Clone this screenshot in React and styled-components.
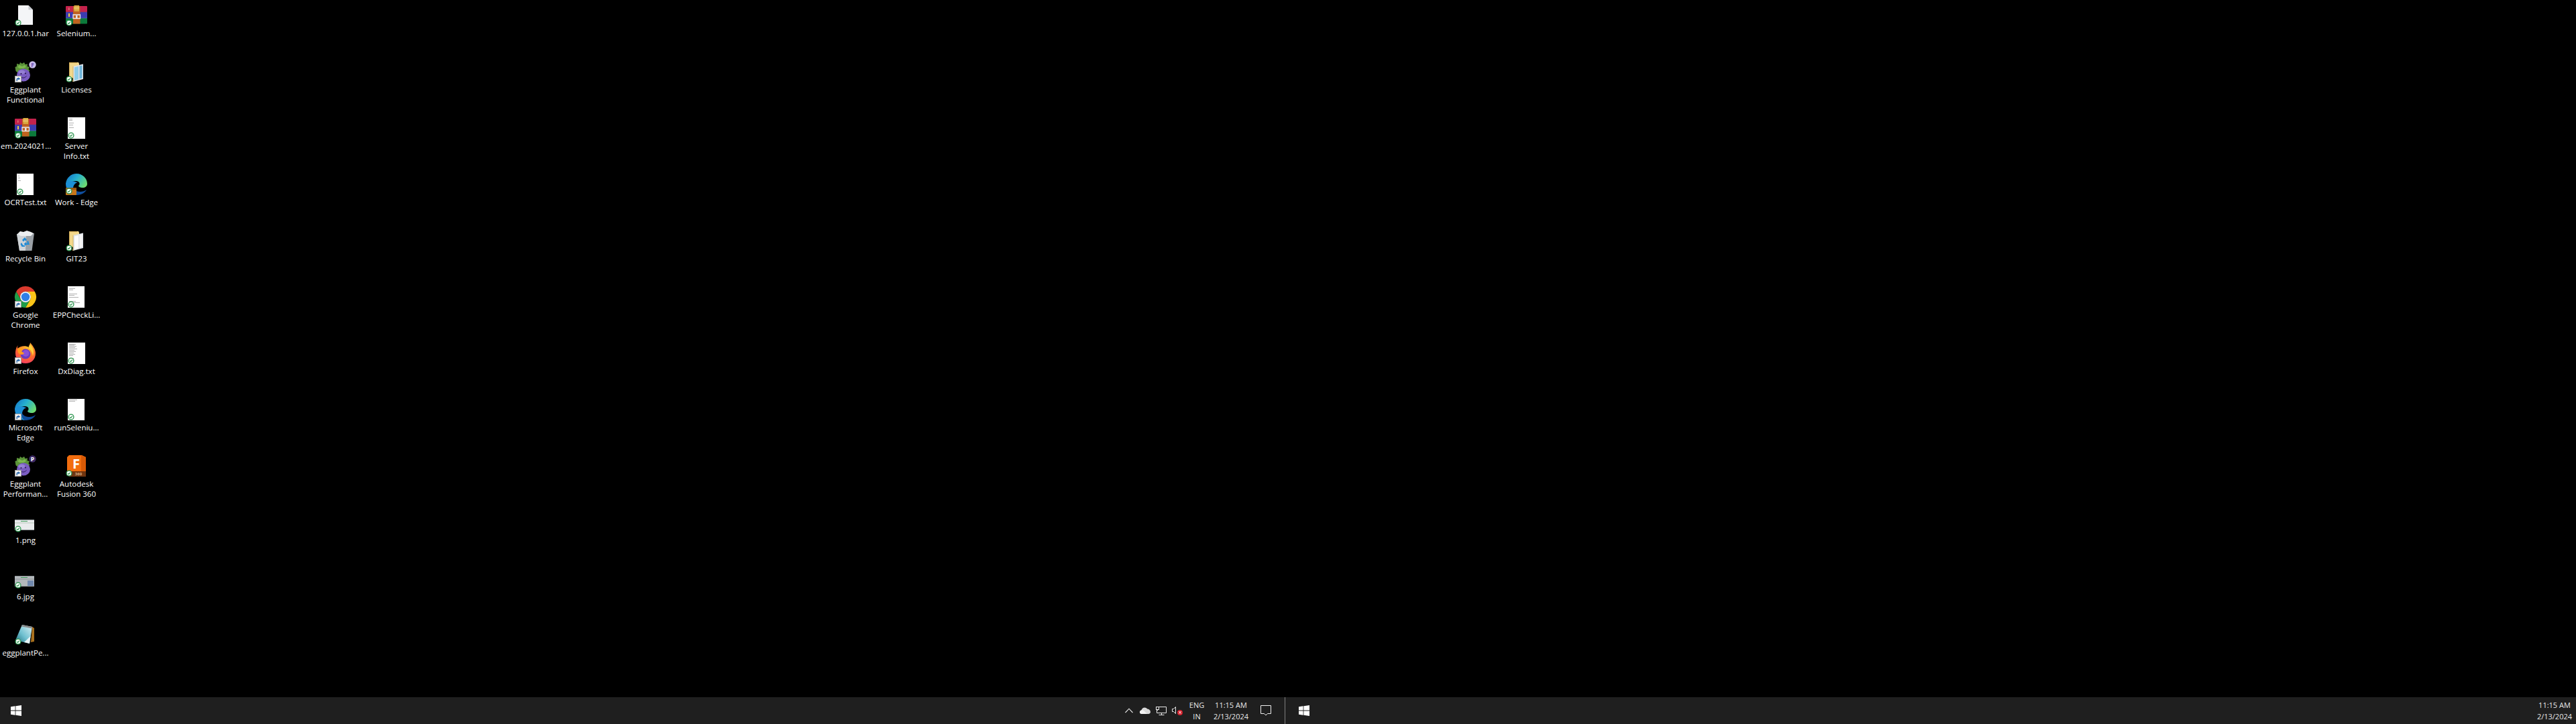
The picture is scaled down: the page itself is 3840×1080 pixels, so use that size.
import styled, { createGlobalStyle } from "styled-components";

const GlobalStyle = createGlobalStyle`
  html, body {
    margin: 0;
    padding: 0;
    background: #000;
  }
  * { box-sizing: border-box; }
`;

const Screen = styled.div`
  width: 3840px;
  height: 1080px;
  display: flex;
  flex-direction: column;
  overflow: hidden;
  font-family: "Open Sans", "Liberation Sans", sans-serif;
`;

const Desktop = styled.div`
  flex: 1;
  display: grid;
  grid-auto-flow: column;
  grid-template-rows: repeat(12, 84px);
  grid-auto-columns: 76px;
  justify-content: start;
  background: #000;
`;

const Shortcut = styled.div`
  display: flex;
  flex-direction: column;
  align-items: center;
  padding-top: 7px;
`;

const IconSlot = styled.div`
  position: relative;
  width: 32px;
  height: 32px;
  svg { display: block; overflow: visible; }
`;

const IconLabel = styled.div`
  width: 74px;
  margin-top: 3px;
  color: #fff;
  font-size: 11.5px;
  line-height: 15px;
  text-align: center;
`;

const BadgeSvg = styled.svg`
  position: absolute;
  left: ${(p) => p.$x}px;
  top: ${(p) => p.$y}px;
`;

const Taskbar = styled.div`
  height: 40px;
  display: flex;
  background: #1f1f1f;
  color: #e8e8e8;
  font-size: 11px;
`;

const ScreenBar = styled.div`
  flex: 1;
  display: flex;
  align-items: stretch;
`;

const StartButton = styled.div`
  width: 48px;
  display: flex;
  align-items: center;
  justify-content: center;
`;

const Spacer = styled.div`
  flex: 1;
`;

const TrayIcon = styled.div`
  width: 24px;
  display: flex;
  align-items: center;
  justify-content: center;
`;

const Lang = styled.div`
  width: 34px;
  display: flex;
  flex-direction: column;
  align-items: center;
  justify-content: center;
  line-height: 17px;
`;

const Clock = styled.div`
  width: ${(p) => (p.$wide ? "68px" : "54px")};
  margin-right: ${(p) => (p.$wide ? "0" : "5px")};
  display: flex;
  flex-direction: column;
  align-items: center;
  justify-content: center;
  line-height: 17px;
  white-space: nowrap;
`;

const ActionCenter = styled.div`
  width: 36px;
  display: flex;
  align-items: center;
  justify-content: center;
`;

const ShowDesktop = styled.div`
  width: 5px;
  margin-left: 10px;
  border-left: 1px solid #808080;
`;

// overlays
const Check = ({ x = 0, y = 21.5 }) => (
  <BadgeSvg $x={x} $y={y} width="10" height="10" viewBox="0 0 10 10">
    <circle cx="5" cy="5" r="3.9" fill="#fff" stroke="#27924a" strokeWidth="1.3" />
    <path d="M3.1 5.1 4.5 6.5 7 3.7" fill="none" stroke="#27924a" strokeWidth="1.2" />
  </BadgeSvg>
);

const LinkArrow = ({ y = 22 }) => (
  <BadgeSvg $x={0} $y={y} width="10" height="10" viewBox="0 0 10 10">
    <rect x="0.5" y="0.5" width="9" height="9" fill="#f2f2f2" stroke="#9a9a9a" />
    <path d="M2.6 8V5.4C2.6 4.2 3.4 3.6 4.6 3.6H5.4V2.2L8 4.4 5.4 6.6V5.2H4.8C4.1 5.2 3.9 5.6 3.9 6.2V8Z" fill="#1c5fa8" />
  </BadgeSvg>
);

const Pill = ({ letter, bg, fg }) => (
  <BadgeSvg $x={21} $y={0} width="11" height="11" viewBox="0 0 11 11">
    <circle cx="5.5" cy="5.5" r="5.2" fill={bg} />
    <text x="5.5" y="8.6" textAnchor="middle" fontSize="8.5" fontWeight="700" fontFamily="Open Sans" fill={fg}>{letter}</text>
  </BadgeSvg>
);

// desktop icons, all drawn in a 32x32 box
const Art = ({ children }) => (
  <svg width="32" height="32" viewBox="0 0 32 32">{children}</svg>
);

const BlankFile = () => (
  <Art>
    <path d="M5 1H20.5L27 7.5V30H5Z" fill="#f4f5f7" />
    <path d="M20.5 1V7.5H27Z" fill="#c6c9cf" />
  </Art>
);

const Winrar = () => (
  <Art>
    <rect x="0" y="2" width="32" height="9" rx="1" fill="#c4224c" />
    <rect x="0" y="11" width="32" height="9" fill="#3c3cb0" />
    <rect x="0" y="20" width="32" height="8.5" rx="1" fill="#0c7a3b" />
    <rect x="0" y="10.6" width="32" height="0.6" fill="#8c3a5c" />
    <rect x="0" y="19.7" width="32" height="0.6" fill="#5a6ab8" />
    <rect x="11" y="2" width="10.5" height="26.5" fill="#c0621f" />
    <rect x="12.5" y="1" width="7.5" height="9" fill="#d9a83f" />
    <path d="M12 6H20M12 4H20" stroke="#f2d98a" strokeWidth="0.8" />
    <path d="M11 15H21.5V20.5H11Z" fill="none" stroke="#ececec" strokeWidth="1.3" />
    <rect x="15" y="16" width="2.5" height="4" fill="#e4e4e4" />
    <rect x="4" y="13" width="2" height="5" fill="#f0d040" />
    <rect x="4" y="4.5" width="1.5" height="3.5" fill="#d87a70" />
  </Art>
);

const Eggplant = () => (
  <Art>
    <path d="M1.5 15 0.5 9 3 8 3 4 7 5 8 2 11 4 14 2 15.5 5 19 4.5 18.5 8 22 9 20.5 12 22.5 15 18 17H4Z" fill="#5a9238" />
    <path d="M4 9 7 6 11 8 15 6 17 9 13 11H7Z" fill="#7cb84e" />
    <ellipse cx="13" cy="21" rx="10" ry="9.5" fill="#7a5cc2" />
    <ellipse cx="10.5" cy="16.5" rx="5" ry="3" fill="#9580d4" />
    <circle cx="9.5" cy="19" r="1.1" fill="#2c1a52" />
    <circle cx="16" cy="18.5" r="1.1" fill="#2c1a52" />
    <path d="M9 23.5C11 26 15 25.5 17.5 22.5" fill="none" stroke="#2c1a52" strokeWidth="1" />
  </Art>
);

const Folder = ({ blue }) => (
  <Art>
    <path d="M5 2H19L20 4V28L5 24Z" fill="#f3d88c" />
    <path d="M5 2H17V3.2H6.2V24L5 24Z" fill="#d9b25a" />
    <path d="M11 8 26 4.5V27L11 31Z" fill="#dfe3e8" />
    <path d="M13 9.5 19 8V27.5L13 29Z" fill={blue ? "#8fcdea" : "#fbfbfb"} />
    <path d="M20.5 7.5 24.5 6.5V25.5L20.5 26.5Z" fill={blue ? "#6fb6da" : "#f5f5f5"} />
    <path d="M5 24 11 31V8" fill="none" stroke="#c9a957" strokeWidth="0.8" />
  </Art>
);

const TextPage = ({ left = 3, width = 26, lines = [] }) => (
  <Art>
    <rect x={left} y="0" width={width} height="32" fill="#fff" />
    {lines.map(([y, w], i) => (
      <rect key={i} x={left + 2} y={y} width={w} height="0.9" fill="#a9a9a9" />
    ))}
  </Art>
);

const EdgeLogo = ({ briefcase }) => (
  <Art>
    <defs>
      <linearGradient id="edgeMain" x1="0" y1="0.2" x2="1" y2="0.7">
        <stop offset="0" stopColor="#1477c8" />
        <stop offset="0.45" stopColor="#26b0cf" />
        <stop offset="1" stopColor="#6fdc6e" />
      </linearGradient>
    </defs>
    <path d="M0 15C1 6 8 0 16 0 25 0 32 7 32 15 32 19 29 21 25 21 22 21 19 20 19 18 22 16 21 11 15 11 7 11 0 16 0 15Z" fill="url(#edgeMain)" />
    <path d="M0 15C0 25 7 32 16 32 12 30 10 26 11 21 12 16 15 13 18 14 9 9 2 11 0 15Z" fill="#1c8fd6" />
    <path d="M16 32C24 32 29 28 31 24 27 27 21 28 16 26 13 25 11 22 11 21 10 26 12 30 16 32Z" fill="#0f4d9c" />
    {briefcase && (
      <>
        <rect x="0" y="21" width="16" height="11" rx="1" fill="#c8761a" />
        <rect x="0" y="21" width="16" height="3" fill="#9a5410" />
      </>
    )}
  </Art>
);

const RecycleBin = () => (
  <Art>
    <path d="M3 6 29 5 25.5 31H7Z" fill="#9aa0a6" />
    <path d="M3 6 17 5.5 16 31H7Z" fill="#cfd3d7" />
    <path d="M4 6 8 2 13 3 18 1 24 3 28 5 24 9H9Z" fill="#eceef0" />
    <path d="M11 15 15 11 18 15 16 16.5 15 15 13 17.5Z" fill="#1e8ad6" />
    <path d="M20 16 22 22H17V24L13.5 21 17 18V20H19L18 17.5Z" fill="#1e8ad6" />
    <path d="M10 19 12.5 23 H15V25H10.5L8.5 21Z" fill="#1e8ad6" />
  </Art>
);

const ChromeLogo = () => (
  <Art>
    <path d="M2.14 8A16 16 0 0 1 29.86 8H16A8 8 0 0 0 9.07 20Z" fill="#db3a2e" />
    <path d="M29.86 8A16 16 0 0 1 16 32L22.93 20A8 8 0 0 0 16 8Z" fill="#fbc518" />
    <path d="M16 32A16 16 0 0 1 2.14 8L9.07 20A8 8 0 0 0 22.93 20Z" fill="#1f9d48" />
    <circle cx="16" cy="16" r="8" fill="#f4f6f8" />
    <circle cx="16" cy="16" r="6.2" fill="#2f7fe8" />
  </Art>
);

const FirefoxLogo = () => (
  <Art>
    <defs>
      <radialGradient id="foxFlame" cx="0.6" cy="0.2" r="0.95">
        <stop offset="0" stopColor="#ffc32e" />
        <stop offset="0.55" stopColor="#ff6a2b" />
        <stop offset="1" stopColor="#f0287a" />
      </radialGradient>
    </defs>
    <path d="M23 0C23 3 20 5 21 7 16 4 8 5 4 9 4 7 4 5 5 4 3 6 1 10 1 16 1 25 8 31 16 31 25 31 31 25 31 16 31 10 27 5 23 0Z" fill="url(#foxFlame)" />
    <circle cx="16" cy="17" r="7.5" fill="#6a3bbd" />
    <circle cx="16.5" cy="16" r="5" fill="#8a50d8" />
    <path d="M4 9C8 7 12 8 13 10L10 13 14 16C11 20 7 17 5 15Z" fill="#ff9a1f" />
    <path d="M23 3C28 8 29 14 27 20 26 14 24 11 21 9Z" fill="#ffd23a" />
  </Art>
);

const FusionLogo = () => (
  <Art>
    <path d="M2 3 5 0H24L30 3V32H6L2 29Z" fill="#f26d0e" />
    <path d="M23 0 30 3V32H23Z" fill="#d95a06" />
    <path d="M2 24H30V32H6L2 29Z" fill="#6e3410" />
    <text x="15.5" y="20" textAnchor="middle" fontSize="20" fontWeight="700" fontFamily="Open Sans" fill="#fff">F</text>
    <text x="19" y="30.3" textAnchor="middle" fontSize="6" fontWeight="700" fontFamily="Open Sans" fill="#d8ae88">360</text>
  </Art>
);

const Thumb = ({ blue }) => (
  <Art>
    <rect x="0" y="12" width="29" height="16" fill={blue ? "#b4b8bc" : "#e9ebec"} />
    <rect x="0" y="12" width="29" height="1" fill="#8e9498" />
    <rect x="9" y="14" width="10" height="1" fill="#3f9a5a" />
    <rect x="0" y="16" width="29" height="2" fill={blue ? "#a0a6aa" : "#cfd8d2"} />
    {blue && <rect x="19" y="19" width="9" height="8" fill="#7088ae" />}
    <rect x="0" y="27" width="29" height="1" fill="#8e9498" />
  </Art>
);

const NotepadIcon = () => (
  <Art>
    <defs>
      <linearGradient id="padSheet" x1="0" y1="1" x2="1" y2="0">
        <stop offset="0" stopColor="#1b6a7a" />
        <stop offset="0.45" stopColor="#6fc0d0" />
        <stop offset="1" stopColor="#dff2f6" />
      </linearGradient>
    </defs>
    <path d="M26 4 29 6 29 26 24 27Z" fill="#a8701e" />
    <path d="M11 1 26 4 22 29 1 24Z" fill="url(#padSheet)" />
    <path d="M22 29 14 27 23.5 18Z" fill="#e8f4f6" />
    <path d="M11 1 26 4 25.5 6.5 10 3.5Z" fill="#8a8a8a" />
  </Art>
);

// tray glyphs
const WinLogo = () => (
  <svg width="16" height="16" viewBox="0 0 16 16">
    <path d="M0 2.3 6.6 1.3V7.6H0ZM7.4 1.2 16 0V7.6H7.4ZM0 8.4H6.6V14.7L0 13.7ZM7.4 8.4H16V16L7.4 14.8Z" fill="#fff" />
  </svg>
);

const Chevron = () => (
  <svg width="12" height="8" viewBox="0 0 12 8">
    <path d="M0.5 7 6 1.2 11.5 7" fill="none" stroke="#e8e8e8" strokeWidth="1.1" />
  </svg>
);

const Cloud = () => (
  <svg width="16" height="16" viewBox="0 0 16 16">
    <path d="M3.2 13C1.3 13 0 11.8 0 10.2 0 8.8 1 7.7 2.4 7.5 3 5 5 3.4 7.3 3.4 9 3.4 10.4 4.2 11.2 5.5 13.8 5.6 16 7.6 16 10.1 16 11.8 14.8 13 13 13Z" fill="#d9d9d9" />
    <path d="M3 13C1.3 13 0 11.8 0 10.2 0 8.8 1 7.7 2.4 7.5 4 7 6 7.5 7 9L11 13Z" fill="#f2f2f2" />
  </svg>
);

const Network = () => (
  <svg width="16" height="16" viewBox="0 0 16 16" fill="none" stroke="#e8e8e8" strokeWidth="1">
    <path d="M4.5 2.5H15.5V11.5H1.5V7" />
    <rect x="0.5" y="2.5" width="4" height="4" />
    <path d="M8.5 11.5V14.5M4.5 14.5H12.5" />
    <path d="M2.5 6.5V8" />
  </svg>
);

const MutedSpeaker = () => (
  <svg width="16" height="16" viewBox="0 0 16 16">
    <path d="M0.5 5.5H2.5L5.5 2.5V12.5L2.5 9.5H0.5Z" fill="none" stroke="#e8e8e8" strokeWidth="1" />
    <circle cx="12" cy="11" r="4" fill="#d4202c" />
    <path d="M10.4 9.4 13.6 12.6M13.6 9.4 10.4 12.6" stroke="#fff" strokeWidth="1.1" />
  </svg>
);

const Bubble = () => (
  <svg width="16" height="16" viewBox="0 0 16 16">
    <path d="M0.5 0.5H15.5V12.5H10.5L8 15 5.5 12.5H0.5Z" fill="none" stroke="#f0f0f0" strokeWidth="1" />
  </svg>
);

const TXT_B = [[3, 9], [5, 6], [11, 12], [13, 8], [16, 14], [22, 10], [24, 16]];
const TXT_C = [[2, 10], [3.5, 8], [5, 11], [7, 9], [9, 12], [11, 8], [13, 10], [15, 7], [17, 9], [19, 6], [23, 7]];

const columns = [
  [
    { label: "127.0.0.1.har", art: <BlankFile />, check: { x: 0 } },
    { label: "Eggplant Functional", art: <Eggplant />, link: true, pill: { letter: "F", bg: "#c9bdea", fg: "#6a4bb0" } },
    { label: "em.2024021...", art: <Winrar />, check: { x: 0 } },
    { label: "OCRTest.txt", art: <TextPage left={3} width={25} lines={[[3, 2], [6, 3], [10, 4]]} />, check: { x: 3 } },
    { label: "Recycle Bin", art: <RecycleBin /> },
    { label: "Google Chrome", art: <ChromeLogo />, link: true },
    { label: "Firefox", art: <FirefoxLogo />, link: true },
    { label: "Microsoft Edge", art: <EdgeLogo />, link: true },
    { label: "Eggplant Performan...", art: <Eggplant />, link: true, pill: { letter: "P", bg: "#3d2a66", fg: "#fff" } },
    { label: "1.png", art: <Thumb />, check: { x: 0, y: 21 } },
    { label: "6.jpg", art: <Thumb blue />, check: { x: 0, y: 21 } },
    { label: "eggplantPe...", art: <NotepadIcon />, check: { x: 0, y: 21 } },
  ],
  [
    { label: "Selenium...", art: <Winrar />, check: { x: 0 } },
    { label: "Licenses", art: <Folder blue />, check: { x: 0 } },
    { label: "Server Info.txt", art: <TextPage lines={[[2, 5], [4, 5], [8, 7], [11, 6], [15, 7]]} />, check: { x: 3 } },
    { label: "Work - Edge", art: <EdgeLogo briefcase />, check: { x: 0, y: 21 } },
    { label: "GIT23", art: <Folder />, check: { x: 0 } },
    { label: "EPPCheckLi...", art: <TextPage left={3} width={25} lines={TXT_B} />, check: { x: 3 } },
    { label: "DxDiag.txt", art: <TextPage lines={TXT_C} />, check: { x: 3 } },
    { label: "runSeleniu...", art: <TextPage left={3} width={25} lines={[[1, 12], [3, 9]]} />, check: { x: 3 } },
    { label: "Autodesk Fusion 360", art: <FusionLogo />, check: { x: 0, y: 22 } },
  ],
];

const DesktopIcon = ({ item }) => (
  <Shortcut>
    <IconSlot>
      {item.art}
      {item.pill && <Pill {...item.pill} />}
      {item.link && <LinkArrow />}
      {item.check && <Check {...item.check} />}
    </IconSlot>
    <IconLabel>{item.label}</IconLabel>
  </Shortcut>
);

const ClockText = ({ wide }) => (
  <Clock $wide={wide}>
    <span>11:15 AM</span>
    <span>2/13/2024</span>
  </Clock>
);

export default function App() {
  return (
    <>
      <GlobalStyle />
      <Screen>
        <Desktop>
          {columns.flat().map((item) => (
            <DesktopIcon key={item.label} item={item} />
          ))}
        </Desktop>
        <Taskbar>
          <ScreenBar>
            <StartButton><WinLogo /></StartButton>
            <Spacer />
            <TrayIcon><Chevron /></TrayIcon>
            <TrayIcon><Cloud /></TrayIcon>
            <TrayIcon><Network /></TrayIcon>
            <TrayIcon><MutedSpeaker /></TrayIcon>
            <Lang><span>ENG</span><span>IN</span></Lang>
            <ClockText wide />
            <ActionCenter><Bubble /></ActionCenter>
            <ShowDesktop />
          </ScreenBar>
          <ScreenBar>
            <StartButton><WinLogo /></StartButton>
            <Spacer />
            <ClockText />
          </ScreenBar>
        </Taskbar>
      </Screen>
    </>
  );
}
